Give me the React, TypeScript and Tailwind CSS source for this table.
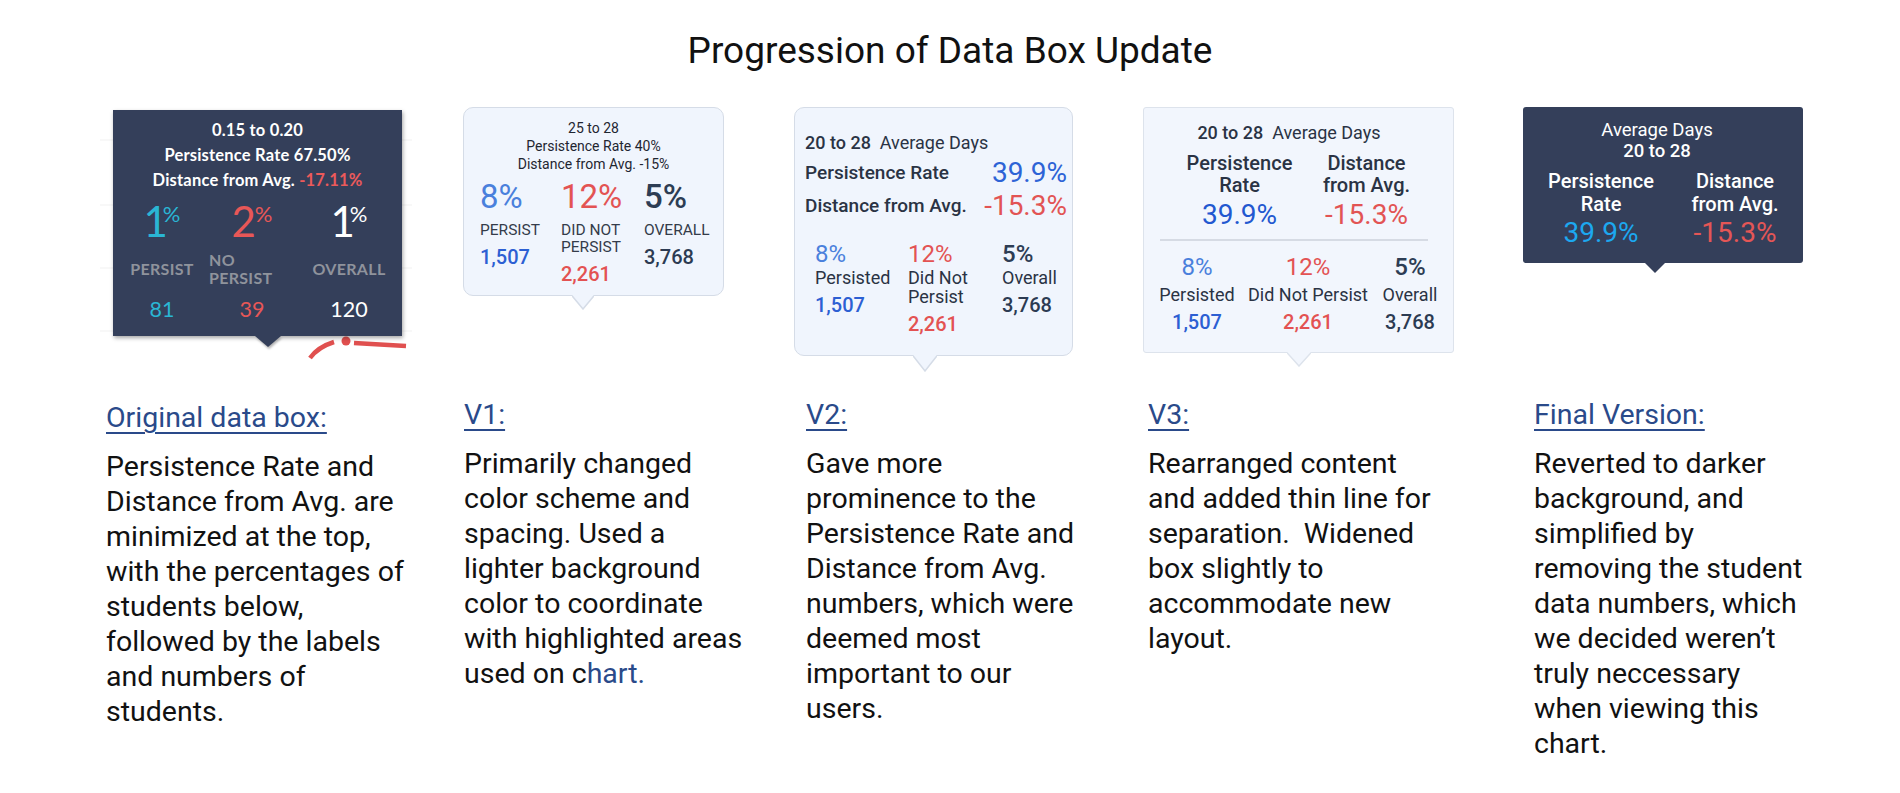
import React from 'react'

const NAVY = 'bg-[#343f5a]'

type ArrowProps = {
  className: string
  w: number
  h: number
  fill: string
  stroke?: string
}

function Arrow({ className, w, h, fill, stroke }: ArrowProps) {
  return (
    <svg
      className={`absolute ${className}`}
      width={w}
      height={h + 1}
      viewBox={`0 0 ${w} ${h + 1}`}
    >
      <polygon points={`0,0 ${w / 2},${h} ${w},0`} fill={fill} />
      {stroke && (
        <polyline
          points={`0,0.75 ${w / 2},${h} ${w},0.75`}
          fill="none"
          stroke={stroke}
          strokeWidth={1.5}
        />
      )}
    </svg>
  )
}

function OriginalBox() {
  return (
    <div className="relative h-[290px]">
      {/* bits of the chart that sit behind the old tooltip */}
      <svg
        className="absolute left-[-8px] top-0"
        width={320}
        height={260}
        viewBox="-8 0 320 260"
      >
        {[30, 95, 158, 221].map(y => (
          <line key={y} x1={-6} x2={306} y1={y} y2={y} stroke="#f1f1f1" strokeWidth={1} />
        ))}
        <path d="M204 248 Q212 237 228 232" fill="none" stroke="#e0504f" strokeWidth={4.5} />
        <circle cx={240} cy={231} r={4.5} fill="#e0504f" />
        <path d="M248 233 L300 236" fill="none" stroke="#e0504f" strokeWidth={4.5} />
      </svg>
      <div
        className={`relative ml-[7px] mt-[3px] h-[226px] w-[289px] ${NAVY} font-['Lato',sans-serif] shadow-[1px_2px_4px_rgba(0,0,0,0.35)]`}
      >
        <div className="pt-[8px] text-center text-[16.5px] font-bold leading-[25px] tracking-[0.2px] text-white">
          <div>0.15 to 0.20</div>
          <div>Persistence Rate 67.50%</div>
          <div>
            Distance from Avg. <span className="text-[#ec5a5a]">-17.11%</span>
          </div>
        </div>
        <div className="flex pl-[9px]">
          {[
            { v: '1', c: 'text-[#2ab6d4]', w: 'w-[80px]', n: '81', label: <span>PERSIST</span> },
            {
              v: '2',
              c: 'text-[#e85757]',
              w: 'w-[100px]',
              n: '39',
              label: (
                <span className="block w-full pl-[7px] text-left leading-[18px]">
                  NO
                  <br />
                  PERSIST
                </span>
              )
            },
            { v: '1', c: 'text-white', w: 'w-[94px]', n: '120', label: <span>OVERALL</span> }
          ].map((col, i) => (
            <div key={i} className={`${col.w} flex flex-col items-center`}>
              <div className={`mt-[5px] flex h-[51px] items-start ${col.c}`}>
                <span
                  className={`mt-[2px] text-[42px] leading-none ${col.v === '1' ? 'tracking-[-5px]' : 'tracking-[-1px]'}`}
                >
                  {col.v}
                </span>
                <span className="mt-[5px] text-[22px] leading-none">%</span>
              </div>
              <div className="flex h-[40px] w-full items-center justify-center text-[16px] font-bold tracking-[0.3px] text-[#8f939c]">
                {col.label}
              </div>
              <div className={`mt-[5px] text-[21.5px] leading-[30px] ${col.c}`}>{col.n}</div>
            </div>
          ))}
        </div>
        <Arrow
          className="left-[142px] top-full drop-shadow-[1px_2px_1px_rgba(0,0,0,0.3)]"
          w={26}
          h={11}
          fill="#343f5a"
        />
      </div>
    </div>
  )
}

function V1Box() {
  return (
    <div className="h-[290px]">
      <div className="relative -ml-[1px] h-[189px] w-[261px] rounded-[10px] border-[1.5px] border-[#d5dce7] bg-[#f0f5fd]">
        <div className="pt-[11px] text-center text-[14px] leading-[18px] text-[#1f2631]">
          <div>25 to 28</div>
          <div>Persistence Rate 40%</div>
          <div>Distance from Avg. -15%</div>
        </div>
        <div className="flex pl-[16px]">
          <div className="w-[81px]">
            <div className="mt-[4px] text-[33px] leading-[40px] text-[#4a80dc]">8%</div>
            <div className="mt-[5px] text-[15.5px] leading-[17px] text-[#343c4a]">PERSIST</div>
            <div className="mt-[6px] text-[20px] font-medium leading-[24px] text-[#2c5fd3]">1,507</div>
          </div>
          <div className="w-[83px]">
            <div className="mt-[4px] text-[33px] leading-[40px] text-[#e35353]">12%</div>
            <div className="mt-[5px] text-[15.5px] leading-[17px] text-[#343c4a]">
              DID NOT
              <br />
              PERSIST
            </div>
            <div className="mt-[6px] text-[20px] font-medium leading-[24px] text-[#e35252]">2,261</div>
          </div>
          <div>
            <div className="mt-[4px] text-[33px] font-medium leading-[40px] text-[#2d3d54]">5%</div>
            <div className="mt-[5px] text-[15.5px] leading-[17px] text-[#343c4a]">OVERALL</div>
            <div className="mt-[6px] text-[20px] font-medium leading-[24px] text-[#2c3b52]">3,768</div>
          </div>
        </div>
        <Arrow className="left-[108px] top-full" w={22} h={14} fill="#f0f5fd" stroke="#d5dce7" />
      </div>
    </div>
  )
}

function V2Box() {
  return (
    <div className="h-[290px]">
      <div className="relative -ml-[12px] h-[249px] w-[279px] rounded-[10px] border-[1.5px] border-[#d5dce7] bg-[#f0f5fd] text-[#2a3344]">
        <div className="pl-[10px] pt-[23px] text-[18px] leading-[24px]">
          <span className="font-medium">20 to 28</span>
          {'\u00a0 '}Average Days
        </div>
        <div className="flex items-center justify-between pl-[10px] pr-[5px] pt-[3px] leading-[30px]">
          <span className="text-[19px] font-medium">Persistence Rate</span>
          <span className="text-[28px] text-[#2d63d6]">39.9%</span>
        </div>
        <div className="flex items-center justify-between pl-[10px] pr-[5px] pt-[3px] leading-[30px]">
          <span className="text-[19px] font-medium">Distance from Avg.</span>
          <span className="text-[28px] text-[#e25454]">-15.3%</span>
        </div>
        <div className="flex pl-[20px] pt-[19px]">
          <div className="w-[93px]">
            <div className="text-[24px] leading-[28px] text-[#4a80dc]">8%</div>
            <div className="text-[18px] leading-[19px]">Persisted</div>
            <div className="mt-[6px] text-[20px] font-medium leading-[24px] text-[#2c5fd3]">1,507</div>
          </div>
          <div className="w-[94px]">
            <div className="text-[24px] leading-[28px] text-[#e35353]">12%</div>
            <div className="text-[18px] leading-[19px]">
              Did Not
              <br />
              Persist
            </div>
            <div className="mt-[6px] text-[20px] font-medium leading-[24px] text-[#e35252]">2,261</div>
          </div>
          <div>
            <div className="text-[24px] font-medium leading-[28px] text-[#2d3d54]">5%</div>
            <div className="text-[18px] leading-[19px]">Overall</div>
            <div className="mt-[6px] text-[20px] font-medium leading-[24px] text-[#2c3b52]">3,768</div>
          </div>
        </div>
        <Arrow className="left-[118px] top-full" w={24} h={16} fill="#f0f5fd" stroke="#d5dce7" />
      </div>
    </div>
  )
}

function V3Box() {
  return (
    <div className="h-[290px]">
      <div className="relative -ml-[5px] h-[246px] w-[311px] rounded-[3px] border-[1.5px] border-[#dde3ec] bg-[#f2f6fd] text-[#2a3344]">
        <div className="w-[290px] pt-[13px] text-center text-[18px] leading-[24px]">
          <span className="font-medium">20 to 28</span>
          {'\u00a0 '}Average Days
        </div>
        <div className="flex pl-[32px] pt-[7px]">
          <div className="w-[127px] text-center">
            <div className="text-[20px] font-medium leading-[22px]">
              Persistence
              <br />
              Rate
            </div>
            <div className="mt-[2px] text-[28px] leading-[34px] text-[#2258d0]">39.9%</div>
          </div>
          <div className="w-[127px] text-center">
            <div className="text-[20px] font-medium leading-[22px]">
              Distance
              <br />
              from Avg.
            </div>
            <div className="mt-[2px] text-[28px] leading-[34px] text-[#e25454]">-15.3%</div>
          </div>
        </div>
        <div className="ml-[16px] mt-[7px] h-[2px] w-[268px] bg-[#d6dbe4]" />
        <div className="flex pl-[9px] pt-[12px] text-center">
          <div className="w-[88px]">
            <div className="text-[24px] leading-[28px] text-[#4a80dc]">8%</div>
            <div className="mt-[3px] text-[18px] leading-[22px]">Persisted</div>
            <div className="mt-[4px] text-[20px] font-medium leading-[24px] text-[#2c5fd3]">1,507</div>
          </div>
          <div className="w-[134px]">
            <div className="text-[24px] leading-[28px] text-[#e35353]">12%</div>
            <div className="mt-[3px] whitespace-nowrap text-[18px] leading-[22px]">Did Not Persist</div>
            <div className="mt-[4px] text-[20px] font-medium leading-[24px] text-[#e35252]">2,261</div>
          </div>
          <div className="w-[70px]">
            <div className="text-[24px] font-medium leading-[28px] text-[#2d3d54]">5%</div>
            <div className="mt-[3px] text-[18px] leading-[22px]">Overall</div>
            <div className="mt-[4px] text-[20px] font-medium leading-[24px] text-[#2c3b52]">3,768</div>
          </div>
        </div>
        <Arrow className="left-[143px] top-full" w={24} h={14} fill="#f2f6fd" stroke="#dde3ec" />
      </div>
    </div>
  )
}

function FinalBox() {
  return (
    <div className="h-[290px]">
      <div className={`relative -ml-[11px] h-[156px] w-[280px] rounded-[3px] ${NAVY} text-white`}>
        <div className="w-[268px] pt-[13px] text-center text-[18.5px] leading-[21px]">
          <div>Average Days</div>
          <div className="font-medium">20 to 28</div>
        </div>
        <div className="flex pl-[11px] pt-[8px] text-center">
          <div className="w-[134px]">
            <div className="text-[20px] font-medium leading-[23px]">
              Persistence
              <br />
              Rate
            </div>
            <div className="text-[28px] leading-[34px] text-[#1ca8f0]">39.9%</div>
          </div>
          <div className="w-[134px]">
            <div className="text-[20px] font-medium leading-[23px]">
              Distance
              <br />
              from Avg.
            </div>
            <div className="text-[28px] leading-[34px] text-[#e45656]">-15.3%</div>
          </div>
        </div>
        <Arrow className="left-[122px] top-full" w={20} h={10} fill="#343f5a" />
      </div>
    </div>
  )
}

const columns: { w: string; box: React.ReactNode; title: string; lines: React.ReactNode[] }[] = [
  {
    w: 'w-[358px]',
    box: <OriginalBox />,
    title: 'Original data box:',
    lines: [
      'Persistence Rate and',
      'Distance from Avg. are',
      'minimized at the top,',
      'with the percentages of',
      'students below,',
      'followed by the labels',
      'and numbers of',
      'students.'
    ]
  },
  {
    w: 'w-[342px]',
    box: <V1Box />,
    title: 'V1:',
    lines: [
      'Primarily changed',
      'color scheme and',
      'spacing. Used a',
      'lighter background',
      'color to coordinate',
      'with highlighted areas',
      <>
        used on c<span className="text-[#2a4a8a]">hart.</span>
      </>
    ]
  },
  {
    w: 'w-[342px]',
    box: <V2Box />,
    title: 'V2:',
    lines: [
      'Gave more',
      'prominence to the',
      'Persistence Rate and',
      'Distance from Avg.',
      'numbers, which were',
      'deemed most',
      'important to our',
      'users.'
    ]
  },
  {
    w: 'w-[386px]',
    box: <V3Box />,
    title: 'V3:',
    lines: [
      'Rearranged content',
      'and added thin line for',
      'separation.\u00a0 Widened',
      'box slightly to',
      'accommodate new',
      'layout.'
    ]
  },
  {
    w: 'w-[330px]',
    box: <FinalBox />,
    title: 'Final Version:',
    lines: [
      'Reverted to darker',
      'background, and',
      'simplified by',
      'removing the student',
      'data numbers, which',
      'we decided weren\u2019t',
      'truly neccessary',
      'when viewing this',
      'chart.'
    ]
  }
]

export default function App() {
  return (
    <div className="h-[793px] w-[1900px] overflow-hidden bg-white font-['Roboto',sans-serif] text-[#111]">
      <h1 className="pt-[28px] text-center text-[37px] font-normal leading-[46px] text-[#111]">
        Progression of Data Box Update
      </h1>
      <div className="mt-[33px] flex pl-[106px]">
        {columns.map(col => (
          <div key={col.title} className={`${col.w} shrink-0`}>
            {col.box}
            <div className="text-[28.5px] leading-[35px] text-[#2a4a8a] underline decoration-[1.5px] underline-offset-[5px]">
              {col.title}
            </div>
            <div className="mt-[14px] whitespace-nowrap text-[28.5px] leading-[35px] text-[#111]">
              {col.lines.map((line, i) => (
                <div key={i}>{line}</div>
              ))}
            </div>
          </div>
        ))}
      </div>
    </div>
  )
}
